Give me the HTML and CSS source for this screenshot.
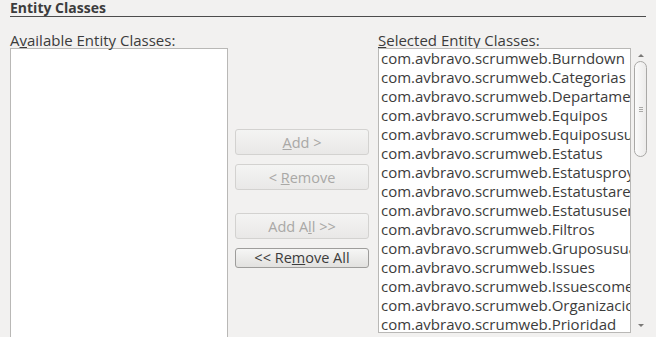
FILE: index.html
```html
<!DOCTYPE html>
<html lang="en">
<head>
    <meta charset="UTF-8">
    <title>Entity Classes</title>
    <link rel="stylesheet" href="styles.css">
</head>
<body>
    <div class="panel">
        <div class="section-title">Entity Classes</div>

        <div class="chooser">
            <div class="column">
                <label class="list-label">A<u>v</u>ailable Entity Classes:</label>
                <div class="listbox available"></div>
            </div>

            <div class="actions">
                <button class="btn" disabled><u>A</u>dd &gt;</button>
                <button class="btn" disabled>&lt; <u>R</u>emove</button>
                <button class="btn spaced" disabled>Add A<u>l</u>l &gt;&gt;</button>
                <button class="btn small">&lt;&lt; Re<u>m</u>ove All</button>
            </div>

            <div class="column">
                <label class="list-label"><u>S</u>elected Entity Classes:</label>
                <div class="list-wrap">
                    <ul class="listbox selected">
                        <li>com.avbravo.scrumweb.Burndown</li>
                        <li>com.avbravo.scrumweb.Categorias</li>
                        <li>com.avbravo.scrumweb.Departamentos</li>
                        <li>com.avbravo.scrumweb.Equipos</li>
                        <li>com.avbravo.scrumweb.Equiposusuarios</li>
                        <li>com.avbravo.scrumweb.Estatus</li>
                        <li>com.avbravo.scrumweb.Estatusproyectos</li>
                        <li>com.avbravo.scrumweb.Estatustareas</li>
                        <li>com.avbravo.scrumweb.Estatususers</li>
                        <li>com.avbravo.scrumweb.Filtros</li>
                        <li>com.avbravo.scrumweb.Gruposusuarios</li>
                        <li>com.avbravo.scrumweb.Issues</li>
                        <li>com.avbravo.scrumweb.Issuescomentarios</li>
                        <li>com.avbravo.scrumweb.Organizaciones</li>
                        <li>com.avbravo.scrumweb.Prioridad</li>
                    </ul>
                    <div class="scrollbar">
                        <span class="arrow up"></span>
                        <div class="thumb"><span class="grip"></span></div>
                        <div class="track"></div>
                        <span class="arrow down"></span>
                    </div>
                </div>
            </div>
        </div>
    </div>
</body>
</html>
```

FILE: styles.css
```css
* {
    margin: 0;
    padding: 0;
    box-sizing: border-box;
}

body {
    background-color: #f2f1f0;
    font-family: 'Open Sans', 'DejaVu Sans', sans-serif;
    font-size: 15px;
    color: #3c3c3c;
    overflow: hidden;
}

/* Section header */
.section-title {
    margin: 0 10px;
    height: 17px;
    line-height: 16px;
    font-size: 14px;
    font-weight: bold;
    color: #3c3c3c;
    border-bottom: 1px solid #4c4c4c;
}

/* Chooser layout */
.chooser {
    display: grid;
    grid-template-columns: 218px 134px 253px;
    column-gap: 7px;
    padding-left: 10px;
    margin-top: 15px;
}

.chooser > .column:last-child {
    margin-left: 2px;
}

.list-label {
    display: block;
    height: 16px;
    line-height: 16px;
    white-space: nowrap;
}

.listbox {
    background: #ffffff;
    border: 1px solid #b9b8b6;
    list-style: none;
    overflow: hidden;
}

.listbox.available {
    height: 320px;
}

.list-wrap {
    display: flex;
    width: 278px;
}

.listbox.selected {
    width: 253px;
    height: 285px;
    flex-shrink: 0;
}

.listbox.selected li {
    height: 19px;
    line-height: 19px;
    padding-left: 2px;
    white-space: nowrap;
}

/* Buttons */
.actions {
    display: flex;
    flex-direction: column;
    gap: 9px;
    padding-top: 97px;
}

.btn {
    height: 26px;
    font-family: inherit;
    font-size: 14.5px;
    color: #a9a8a6;
    background: linear-gradient(#f4f4f3, #e9e8e7);
    border: 1px solid #d3d2d0;
    border-radius: 3px;
}

.btn.spaced {
    margin-top: 14px;
}

.btn.small {
    height: 20px;
    line-height: 16px;
    color: #3c3c3c;
    border-color: #9e9d9b;
    background: linear-gradient(#f6f6f5, #e2e1df);
}

/* Scrollbar */
.scrollbar {
    flex: 1;
    height: 285px;
    display: flex;
    flex-direction: column;
    align-items: flex-start;
    padding-left: 3px;
}

.arrow {
    display: block;
    width: 0;
    height: 0;
    margin-left: 4px;
    border-left: 3px solid transparent;
    border-right: 3px solid transparent;
}

.arrow.up {
    margin-top: 6px;
    border-bottom: 3px solid #7a7977;
}

.arrow.down {
    margin-bottom: 6px;
    border-top: 3px solid #7a7977;
}

.thumb {
    width: 13px;
    height: 96px;
    margin-top: 4px;
    border: 1px solid #a9a8a6;
    border-radius: 7px;
    background: linear-gradient(to right, #fbfbfb, #ecebea);
    display: flex;
    align-items: center;
    justify-content: center;
}

.grip {
    width: 4px;
    height: 5px;
    background: repeating-linear-gradient(#a9a8a6 0 1px, transparent 1px 2px);
}

.track {
    flex: 1;
}
```
